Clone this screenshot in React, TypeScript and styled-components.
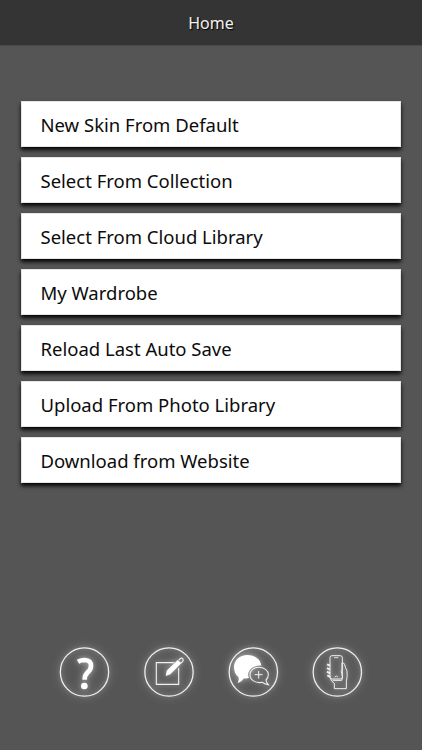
import React from 'react';
import styled, { createGlobalStyle } from 'styled-components';

const GlobalStyle = createGlobalStyle`
  * { box-sizing: border-box; }
  html, body { margin: 0; padding: 0; }
  body { background: #555; font-family: "Noto Sans", "Open Sans", sans-serif; }
`;

const Screen = styled.div`
  display: flex;
  flex-direction: column;
  width: 100%;
  height: 750px;
  background: #555;
  overflow: hidden;
`;

const Header = styled.header`
  display: flex;
  align-items: center;
  justify-content: center;
  flex: none;
  height: 46px;
  background: #343434;
  border-bottom: 1px solid #4a4a4a;
`;

const Title = styled.h1`
  margin: 0;
  font-size: 16px;
  line-height: 22px;
  font-weight: 400;
  color: #f2f2f2;
  text-shadow: 1px 1px 1px #000;
`;

const Menu = styled.nav`
  display: flex;
  flex-direction: column;
  gap: 10px;
  padding: 55px 21px 0;
`;

const MenuButton = styled.button`
  height: 46px;
  padding: 1px 0 0 19.5px;
  border: 0;
  background: #fff;
  color: #0c0c0c;
  font: 400 18.5px/45px "Noto Sans", "Open Sans", sans-serif;
  text-align: left;
  white-space: nowrap;
  box-shadow: inset 0 0 0 1px rgba(0, 0, 0, 0.1), 0 3px 4px rgba(0, 0, 0, 0.95);
`;

const Footer = styled.footer`
  display: flex;
  gap: 14px;
  margin-top: auto;
  padding: 0 50px 45px;
`;

const RoundButton = styled.button`
  width: 70px;
  height: 65px;
  padding: 0;
  border: 0;
  background: none;
`;

const Glyph = styled.svg`
  display: block;
  overflow: visible;
  filter: drop-shadow(0 0 2px rgba(255, 255, 255, 0.35)) drop-shadow(0 0 5px rgba(255, 255, 255, 0.4));
`;

const entries = [
  'New Skin From Default',
  'Select From Collection',
  'Select From Cloud Library',
  'My Wardrobe',
  'Reload Last Auto Save',
  'Upload From Photo Library',
  'Download from Website',
];

function CircleAction({ label, cx, children }: { label: string; cx: number; children: React.ReactNode }) {
  return (
    <RoundButton aria-label={label}>
      <Glyph width="70" height="65" viewBox="0 0 210 195" fill="none" stroke="#f0f0f0" strokeWidth="3.8">
        <circle cx={cx} cy="96" r="72.5" />
        {children}
      </Glyph>
    </RoundButton>
  );
}

export default function App() {
  return (
    <>
      <GlobalStyle />
      <Screen>
        <Header>
          <Title>Home</Title>
        </Header>
        <Menu>
          {entries.map((entry) => (
            <MenuButton key={entry}>{entry}</MenuButton>
          ))}
        </Menu>
        <Footer>
          <CircleAction label="Help" cx={103.5}>
            <path
              d="M84 65 Q93 60 104 60 Q124 61 123 79 Q122 90 112 98 Q104 105 104 119"
              stroke="#fff"
              strokeWidth="14"
            />
            <circle cx="103" cy="138" r="10" fill="#fff" stroke="none" />
          </CircleAction>
          <CircleAction label="Edit" cx={105}>
            <path d="M121 68H67V133H134V84" strokeWidth="3.4" />
            <path d="M95 108 L98 92 L131 60 L142 70 L109 103 Z" fill="#fff" stroke="none" />
            <path d="M134 61 L140 55 Q144 53 147 57 Q149 61 146 64 L141 69" strokeWidth="3.5" />
          </CircleAction>
          <CircleAction label="Community" cx={106}>
            <path
              d="M93 113 Q88 116 78 115 Q73 124 59 130 Q64 120 62 112 Q48 101 48 82 C48 61 65 45 88 45 C110 45 128 58 130 77 C111 74 93 86 90 102 Q90 108 93 113Z"
              fill="#fff"
              stroke="none"
            />
            <path
              d="M122 82 C138 82 151 91 151 104 Q151 113 144 120 Q145 128 151 134 Q138 132 133 127 C111 131 96 119 96 104 C96 91 108 82 122 82Z"
              strokeWidth="3.2"
            />
            <path d="M122 93V116M110 104H134" strokeWidth="3" />
          </CircleAction>
          <CircleAction label="Device" cx={106}>
            <rect x="84" y="47" width="37" height="70" rx="6" strokeWidth="3" />
            <path d="M96 53H109M98 111Q103 105 108 111" strokeWidth="2.5" />
            <path d="M75 73L84 77M75 84L84 89M75 95L84 100M76 106L85 111" strokeWidth="6" />
            <path
              d="M84 112 Q88 126 97 130 V146 H133 V125 Q137 109 135 93 Q130 83 128 74 Q126 67 120 69 L120 88 Q115 94 120 102 Q124 113 119 121 H92"
              strokeWidth="3"
            />
          </CircleAction>
        </Footer>
      </Screen>
    </>
  );
}
